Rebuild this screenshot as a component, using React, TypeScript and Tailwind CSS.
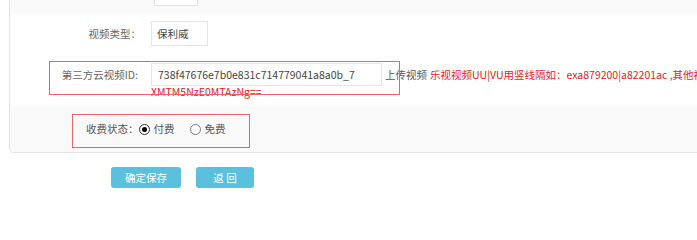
export default function App() {
  return (
    <div className="relative w-[697px] h-[203px] overflow-hidden bg-white font-['Noto_Sans_CJK_SC','Noto_Sans',sans-serif] text-[10.5px] text-[#555]">
      <div className="ml-[9px] w-[900px] border-l border-b border-[#e3e3e3] rounded-bl-[5px] overflow-hidden">
        {/* top row, mostly cut off */}
        <div className="h-[14px] bg-[#f9f9f9]">
          <div className="ml-[144px] w-[44px] h-[6px] border border-t-0 border-[#e3e3e3] bg-white" />
        </div>

        {/* 视频类型 */}
        <div className="h-[39px] flex items-center bg-white">
          <div className="w-[131px] text-right text-[#666] leading-[25px]">视频类型：</div>
          <div className="ml-[10px] w-[57px] h-[25px] border border-[#e5e5e5] pl-[5px] leading-[23px] text-[#444]">
            保利威
          </div>
        </div>

        {/* 第三方云视频ID */}
        <div className="h-[53px] flex items-start bg-white pt-[10px]">
          <div className="w-[128px] mr-[3px] text-right text-[#666] leading-[23px]">第三方云视频ID:</div>
          <div className="ml-[10px] flex flex-col">
            <div className="flex items-center h-[23px] whitespace-nowrap">
              <div className="w-[231px] h-[23px] border border-[#e5e5e5] pl-[6px] leading-[21px] text-[#444]">
                738f47676e7b0e831c714779041a8a0b_7
              </div>
              <span className="ml-[3px] text-[#555]">上传视频</span>
              <span className="ml-[3px] text-[#e52222]">
                乐视视频UU|VU用竖线隔如：exa879200|a82201ac ,其他视频直接填写ID如：
              </span>
            </div>
            <div className="leading-[12px] text-[#e52222]">XMTM5NzE0MTAzNg==</div>
          </div>
        </div>

        {/* 收费状态 */}
        <div className="h-[46px] flex items-center bg-[#f9f9f9] pl-[76px]">
          <span className="text-[#555]">收费状态：</span>
          <span className="w-[11px] h-[11px] rounded-full border border-[#333] bg-white flex items-center justify-center">
            <span className="w-[5px] h-[5px] rounded-full bg-black" />
          </span>
          <span className="ml-[4px]">付费</span>
          <span className="ml-[15px] w-[11px] h-[11px] rounded-full border border-[#777] bg-white" />
          <span className="ml-[4px]">免费</span>
        </div>
      </div>

      {/* buttons */}
      <div className="flex mt-[14px] ml-[111px]">
        <button className="w-[70px] h-[21px] rounded-[3px] bg-[#5bc0de] text-white text-[10.5px] leading-[21px]">
          确定保存
        </button>
        <button className="ml-[15px] w-[58px] h-[21px] rounded-[3px] bg-[#5bc0de] text-white text-[10.5px] leading-[21px]">
          返 回
        </button>
      </div>

      {/* red annotation boxes */}
      <div className="absolute left-[49px] top-[61px] w-[351px] h-[34px] border border-[#e06868] pointer-events-none" />
      <div className="absolute left-[72px] top-[114px] w-[178px] h-[34px] border border-[#e06868] pointer-events-none" />
    </div>
  );
}
